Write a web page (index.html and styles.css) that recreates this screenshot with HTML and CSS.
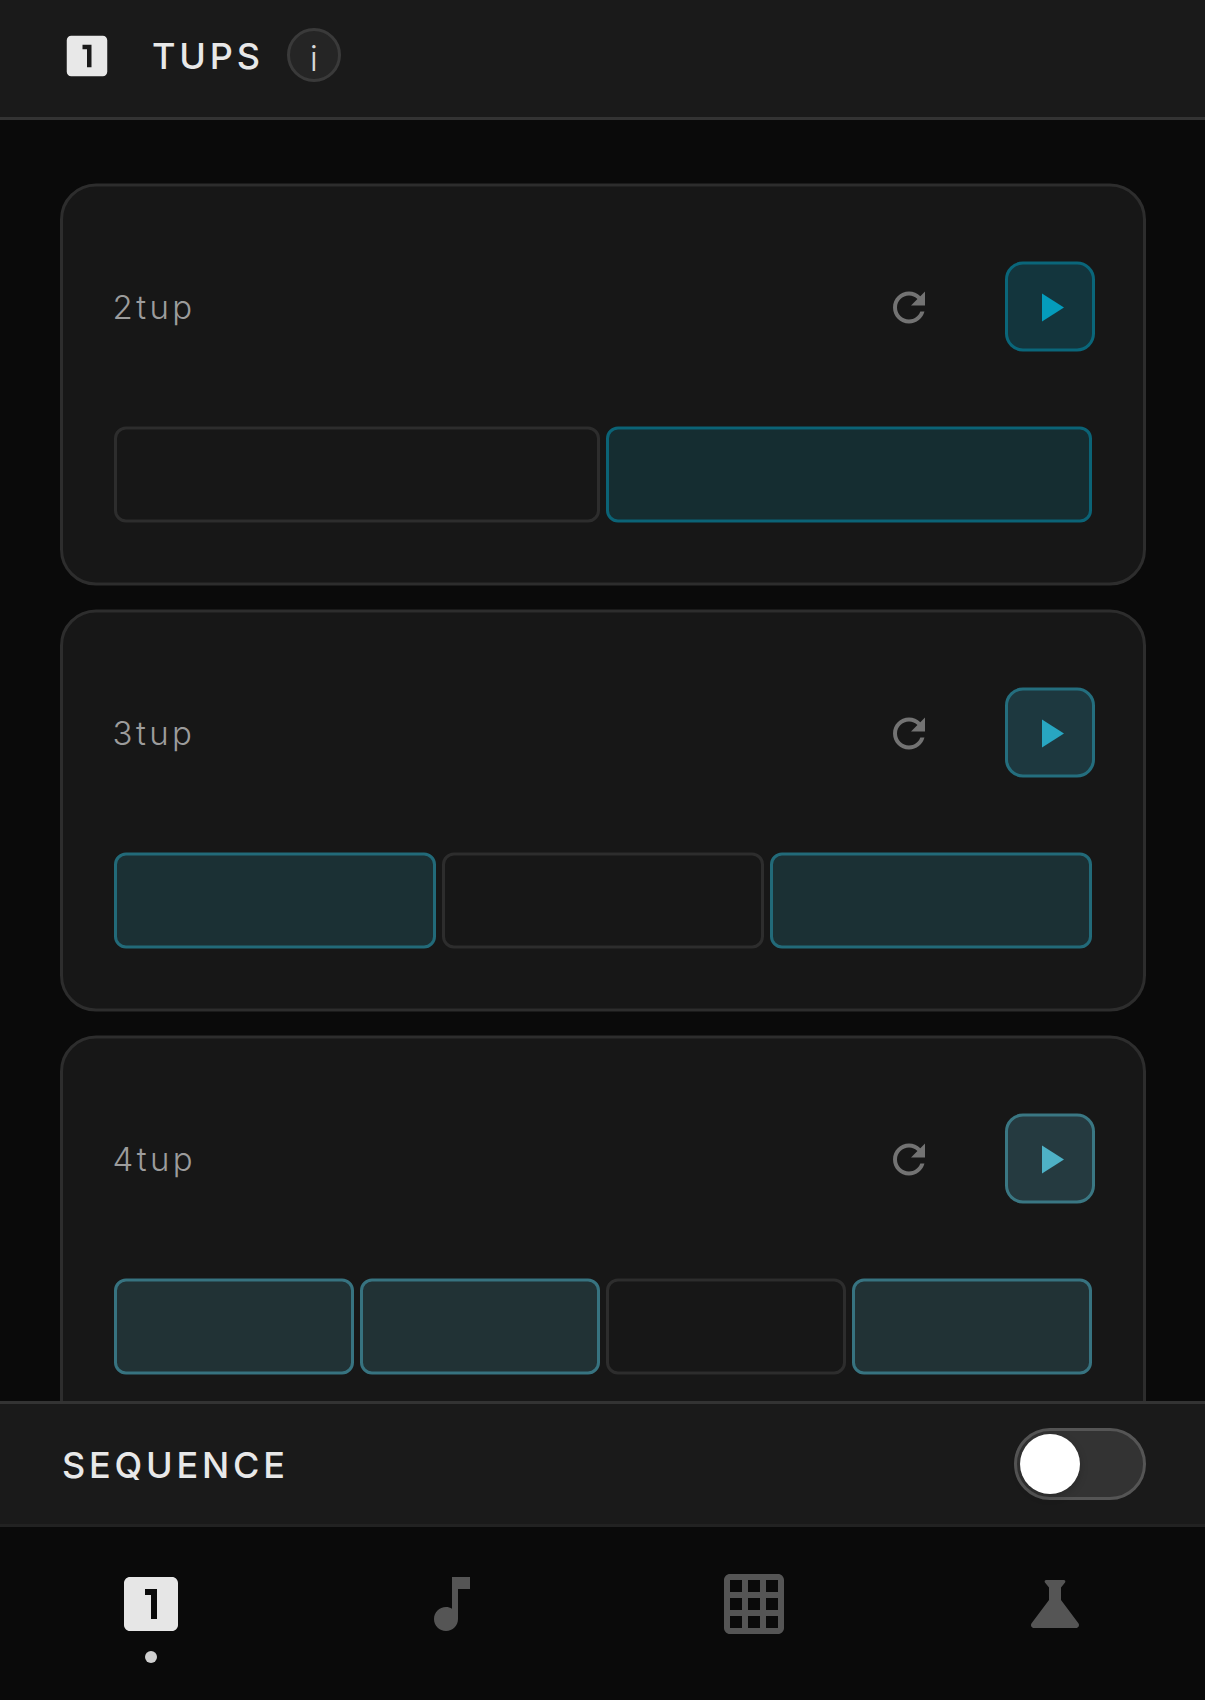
FILE: index.html
```html
<!DOCTYPE html>
<html lang="en">
<head>
<meta charset="utf-8">
<title>Tups</title>
<link rel="stylesheet" href="styles.css">
</head>
<body>
<svg class="sprite" aria-hidden="true">
  <symbol id="one" viewBox="0 0 24 24"><path d="M19 3H5c-1.1 0-2 .9-2 2v14c0 1.1.9 2 2 2h14c1.1 0 2-.9 2-2V5c0-1.1-.9-2-2-2zm-5 14h-2V9h-2V7h4v10z"/></symbol>
  <symbol id="refresh" viewBox="0 0 24 24"><path d="M17.65 6.35C16.2 4.9 14.21 4 12 4c-4.42 0-7.99 3.58-7.99 8s3.57 8 7.99 8c3.73 0 6.84-2.55 7.73-6h-2.08c-.82 2.33-3.04 4-5.65 4-3.31 0-6-2.69-6-6s2.69-6 6-6c1.66 0 3.14.69 4.22 1.78L13 11h7V4l-2.35 2.35z"/></symbol>
  <symbol id="play" viewBox="0 0 24 24"><path d="M8 5v14l11-7z"/></symbol>
  <symbol id="note" viewBox="0 0 24 24"><path d="M12 3v10.55c-.59-.34-1.27-.55-2-.55-2.21 0-4 1.79-4 4s1.79 4 4 4 4-1.79 4-4V7h4V3h-6z"/></symbol>
  <symbol id="grid" viewBox="0 0 24 24"><path d="M20 2H4c-1.1 0-2 .9-2 2v16c0 1.1.9 2 2 2h16c1.1 0 2-.9 2-2V4c0-1.1-.9-2-2-2zM8 20H4v-4h4v4zm0-6H4v-4h4v4zm0-6H4V4h4v4zm6 12h-4v-4h4v4zm0-6h-4v-4h4v4zm0-6h-4V4h4v4zm6 12h-4v-4h4v4zm0-6h-4v-4h4v4zm0-6h-4V4h4v4z"/></symbol>
  <symbol id="flask" viewBox="0 0 24 24"><path d="M19.8 18.4L14 10.67V6.5l1.35-1.69C15.61 4.48 15.38 4 14.96 4H9.04C8.62 4 8.39 4.48 8.65 4.81L10 6.5v4.17L4.2 18.4C3.71 19.06 4.18 20 5 20h14c.82 0 1.29-.94.8-1.6z"/></symbol>
</svg>
<div class="app">
  <header class="header">
    <svg class="logo"><use href="#one"/></svg>
    <h1 class="title">TUPS</h1>
    <button class="info">i</button>
  </header>
  <main class="list">
    <section class="card tone-1">
      <div class="row">
        <span class="name">2tup</span>
        <button class="reset"><svg><use href="#refresh"/></svg></button>
        <button class="play"><svg><use href="#play"/></svg></button>
      </div>
      <div class="cells"><i class="cell"></i><i class="cell on"></i></div>
    </section>
    <section class="card tone-2">
      <div class="row">
        <span class="name">3tup</span>
        <button class="reset"><svg><use href="#refresh"/></svg></button>
        <button class="play"><svg><use href="#play"/></svg></button>
      </div>
      <div class="cells"><i class="cell on"></i><i class="cell"></i><i class="cell on"></i></div>
    </section>
    <section class="card tone-3">
      <div class="row">
        <span class="name">4tup</span>
        <button class="reset"><svg><use href="#refresh"/></svg></button>
        <button class="play"><svg><use href="#play"/></svg></button>
      </div>
      <div class="cells"><i class="cell on"></i><i class="cell on"></i><i class="cell"></i><i class="cell on"></i></div>
    </section>
  </main>
  <section class="sequence">
    <h2 class="title">SEQUENCE</h2>
    <button class="toggle"><span class="knob"></span></button>
  </section>
  <nav class="nav">
    <a class="tab active"><svg><use href="#one"/></svg><span class="dot"></span></a>
    <a class="tab"><svg><use href="#note"/></svg></a>
    <a class="tab"><svg><use href="#grid"/></svg></a>
    <a class="tab"><svg><use href="#flask"/></svg></a>
  </nav>
</div>
</body>
</html>
```
FILE: styles.css
```css
* { box-sizing: border-box; }
html { overflow: hidden; }
body { margin: 0; background: #0a0a0a; color: #e8e8e8; font-family: Inter, sans-serif; }
button { padding: 0; margin: 0; font: inherit; color: inherit; background: none; border: 0; }
svg { display: block; fill: currentColor; }
.sprite { display: none; }
.app { width: 1206px; height: 1700px; display: flex; flex-direction: column; overflow: hidden; }

.header { flex: none; height: 120px; display: flex; align-items: center; padding: 0 60px 6px; background: #1a1a1a; border-bottom: 3px solid #333; }
.logo { width: 54px; height: 54px; margin-right: 38px; }
.title { margin: 0; font-size: 36px; line-height: 44px; font-weight: 500; letter-spacing: 3.8px; }
.info { width: 54px; height: 54px; margin-left: 23px; margin-bottom: 1px; padding-top: 6px; border: 3px solid #3a3a3a; border-radius: 50%; background: #252525; color: #d8d8d8; font-size: 35px; line-height: 42px; font-weight: 300; text-align: center; }

.list { flex: 1; min-height: 0; overflow: hidden; padding: 63px 60px 0; }
.card { height: 402px; margin-bottom: 24px; padding: 75px 51px 0; border: 3px solid #2d2d2d; border-radius: 36px; background: #171717; transform: translateY(.5px); }
.row { display: flex; align-items: center; height: 90px; margin-right: -3px; }
.name { flex: 1; margin-left: -1.5px; color: #9c9c9c; font-size: 33px; line-height: 40px; font-weight: 300; letter-spacing: 3.4px; }
.reset { width: 90px; height: 90px; margin-right: 51px; display: grid; place-items: center; color: #737373; }
.reset svg, .play svg { width: 48px; height: 48px; margin-top: 1px; }
.play { width: 90px; height: 90px; display: grid; place-items: center; border: 3px solid var(--play-line); border-radius: 18px; background: var(--play-fill); color: var(--accent); }
.cells { display: flex; gap: 6px; margin: 75px 0 0; }
.cell { flex: 1; height: 96px; border: 3px solid #2d2d2d; border-radius: 12px; }
.cell.on { border-color: var(--cell-line); background: var(--cell-fill); }
.tone-1 { --accent: #049cbc; --play-line: #0a667a; --play-fill: #13353d; --cell-line: #0b6376; --cell-fill: #152d31; }
.tone-2 { --accent: #28a6c1; --play-line: #246e7e; --play-fill: #1d383f; --cell-line: #226a79; --cell-fill: #1b3034; }
.tone-3 { --accent: #4eb1c6; --play-line: #3a7783; --play-fill: #253a40; --cell-line: #377380; --cell-fill: #213235; }

.sequence { flex: none; height: 123px; display: flex; align-items: center; justify-content: space-between; padding: 0 60px 0 62px; background: #1a1a1a; border-top: 3px solid #333; }
.sequence .title { padding-top: 2px; }
.toggle { width: 132px; height: 72px; padding: 3px; border: 3px solid #555; border-radius: 36px; background: #333; }
.knob { display: block; width: 60px; height: 60px; border-radius: 50%; background: #fff; box-shadow: 0 3px 9px rgba(0, 0, 0, .2); }

.nav { flex: none; height: 176px; display: flex; border-top: 3px solid #222; }
.tab { flex: 1; display: flex; flex-direction: column; align-items: center; padding-top: 41px; color: #555; }
.tab.active { color: #e6e6e6; }
.tab svg { width: 72px; height: 72px; }
.dot { width: 12px; height: 12px; margin-top: 11px; border-radius: 50%; background: #d0d0d0; }
```
